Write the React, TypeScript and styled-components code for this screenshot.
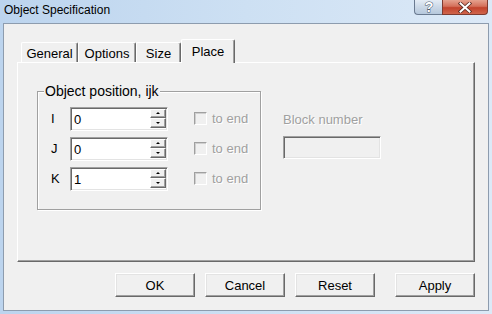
import { createGlobalStyle, styled } from "styled-components";

const Global = createGlobalStyle`
  html, body {
    margin: 0;
    padding: 0;
    overflow: hidden;
    background: #cfe0f2;
  }
`;

const tabs = [
  { label: "General", width: 57 },
  { label: "Options", width: 58 },
  { label: "Size", width: 45 },
  { label: "Place", width: 54, active: true },
];

const rows = [
  { axis: "I", value: "0" },
  { axis: "J", value: "0" },
  { axis: "K", value: "1" },
];

const buttons = [
  { label: "OK" },
  { label: "Cancel" },
  { label: "Reset" },
  { label: "Apply", apart: true },
];

export default function App() {
  return (
    <>
      <Global />
      <Window>
        <TitleBar>
          <Title>Object Specification</Title>
          <CaptionButtons>
            <HelpButton>
              <svg width="12" height="14" viewBox="0 0 12 14">
                <text
                  x="6"
                  y="12"
                  textAnchor="middle"
                  fontFamily="Liberation Sans, sans-serif"
                  fontWeight="bold"
                  fontSize="14"
                  fill="#fff"
                  stroke="#4a5a6e"
                  strokeWidth="1"
                  paintOrder="stroke"
                >
                  ?
                </text>
              </svg>
            </HelpButton>
            <CloseButton>
              <svg width="14" height="11" viewBox="0 0 14 11">
                <path
                  d="M2.5 1.5 L11.5 9.5 M11.5 1.5 L2.5 9.5"
                  stroke="#5a2a22"
                  strokeWidth="3.6"
                  strokeLinecap="square"
                />
                <path
                  d="M2.5 1.5 L11.5 9.5 M11.5 1.5 L2.5 9.5"
                  stroke="#fff"
                  strokeWidth="2"
                  strokeLinecap="square"
                />
              </svg>
            </CloseButton>
          </CaptionButtons>
        </TitleBar>
        <Body>
          <TabStrip>
            {tabs.map((t) => (
              <Tab key={t.label} $width={t.width} $active={t.active}>
                {t.label}
              </Tab>
            ))}
          </TabStrip>
          <Panel>
            <Group>
              <Legend>Object position, ijk</Legend>
              {rows.map((r) => (
                <Row key={r.axis}>
                  <Axis>{r.axis}</Axis>
                  <Edit>
                    <EditText>{r.value}</EditText>
                    <Spin>
                      <SpinButton>
                        <ArrowUp />
                      </SpinButton>
                      <SpinButton>
                        <ArrowDown />
                      </SpinButton>
                    </Spin>
                  </Edit>
                  <Check />
                  <DisabledText>to end</DisabledText>
                </Row>
              ))}
            </Group>
            <BlockColumn>
              <DisabledText>Block number</DisabledText>
              <BlockInput />
            </BlockColumn>
          </Panel>
          <ButtonRow>
            {buttons.map((b) => (
              <PushButton key={b.label} $apart={b.apart}>
                {b.label}
              </PushButton>
            ))}
          </ButtonRow>
        </Body>
      </Window>
    </>
  );
}

const Window = styled.div`
  width: 492px;
  height: 314px;
  box-sizing: border-box;
  display: flex;
  flex-direction: column;
  background: linear-gradient(to right, #bcd4ee 0%, #cde0f3 50%, #dce9f7 100%);
  font-family: "Liberation Sans", Arial, sans-serif;
`;

const TitleBar = styled.div`
  height: 23px;
  display: flex;
  align-items: flex-start;
  padding-left: 4px;
`;

const Title = styled.div`
  padding-top: 3px;
  font-size: 12px;
  line-height: 15px;
  color: #000;
`;

const CaptionButtons = styled.div`
  margin-left: auto;
  margin-right: 4px;
  display: flex;
`;

const CaptionButton = styled.div`
  height: 15px;
  box-sizing: border-box;
  display: flex;
  align-items: center;
  justify-content: center;
  border: 1px solid #6a7a90;
  border-top: none;
`;

const HelpButton = styled(CaptionButton)`
  width: 28px;
  border-right: none;
  border-bottom-left-radius: 4px;
  background: linear-gradient(to bottom, #e4ecf5 0%, #cbd8e7 50%, #b6c8dc 100%);
`;

const CloseButton = styled(CaptionButton)`
  width: 46px;
  border-color: #7e3b30;
  border-bottom-right-radius: 4px;
  background: linear-gradient(to bottom, #e5a28f 0%, #d4705a 45%, #c2432c 55%, #d0654c 100%);
`;

const Body = styled.div`
  flex: 1;
  margin: 0 3px 3px 3px;
  border: 1px solid #8d9cae;
  background: #f0f0f0;
  padding: 15px 13px 0 13px;
  display: flex;
  flex-direction: column;
  font-size: 13px;
  line-height: 15px;
  color: #000;
`;

const TabStrip = styled.div`
  height: 23px;
  display: flex;
  align-items: flex-end;
  padding-left: 4px;
  position: relative;
  z-index: 1;
`;

const Tab = styled.div<{ $width: number; $active?: boolean }>`
  width: ${(p) => p.$width}px;
  height: ${(p) => (p.$active ? 24 : 20)}px;
  margin-bottom: ${(p) => (p.$active ? -1 : 0)}px;
  box-sizing: border-box;
  display: flex;
  align-items: flex-start;
  justify-content: center;
  padding-top: ${(p) => (p.$active ? 4 : 3)}px;
  background: #f0f0f0;
  border-top: 1px solid #fff;
  border-left: 1px solid #fff;
  border-right: 1px solid #696969;
  border-top-left-radius: 2px;
  border-top-right-radius: 2px;
  box-shadow: inset -1px 0 0 #a0a0a0;
`;

const Panel = styled.div`
  width: 458px;
  height: 200px;
  box-sizing: border-box;
  border-top: 1px solid #fff;
  border-left: 1px solid #fff;
  border-right: 1px solid #696969;
  border-bottom: 1px solid #696969;
  box-shadow: inset -1px -1px 0 #a0a0a0;
  padding: 28px 0 0 19px;
  display: flex;
  align-items: flex-start;
`;

const Group = styled.div`
  position: relative;
  width: 224px;
  height: 119px;
  box-sizing: border-box;
  border: 1px solid #a0a0a0;
  box-shadow: inset 1px 1px 0 #fff, 1px 1px 0 #fff;
  padding: 15px 0 0 11px;
  display: flex;
  flex-direction: column;
  gap: 7px;
`;

const Legend = styled.div`
  position: absolute;
  top: -9px;
  left: 6px;
  padding: 0 1px;
  font-size: 14px;
  line-height: 16px;
  background: #f0f0f0;
`;

const Row = styled.div`
  height: 23px;
  display: flex;
  align-items: center;
`;

const Axis = styled.div`
  width: 21px;
  padding-left: 2px;
  box-sizing: border-box;
`;

const Edit = styled.div`
  width: 98px;
  height: 24px;
  box-sizing: border-box;
  display: flex;
  border-top: 1px solid #a0a0a0;
  border-left: 1px solid #a0a0a0;
  border-right: 1px solid #fff;
  border-bottom: 1px solid #fff;
  box-shadow: inset 1px 1px 0 #696969, inset -1px -1px 0 #e3e3e3;
  background: #fff;
  padding: 1px;
`;

const EditText = styled.div`
  flex: 1;
  padding: 3px 0 0 2px;
`;

const Spin = styled.div`
  width: 16px;
  display: flex;
  flex-direction: column;
  margin: 0 0 1px 0;
`;

const SpinButton = styled.div`
  flex: 1;
  display: flex;
  align-items: center;
  justify-content: center;
  background: #f0f0f0;
  border-top: 1px solid #fff;
  border-left: 1px solid #fff;
  border-right: 1px solid #696969;
  border-bottom: 1px solid #696969;
  box-shadow: inset -1px -1px 0 #a0a0a0;
`;

const ArrowUp = styled.div`
  width: 0;
  height: 0;
  border-left: 2px solid transparent;
  border-right: 2px solid transparent;
  border-bottom: 2px solid #000;
`;

const ArrowDown = styled.div`
  width: 0;
  height: 0;
  border-left: 2px solid transparent;
  border-right: 2px solid transparent;
  border-top: 2px solid #000;
`;

const Check = styled.div`
  width: 13px;
  height: 13px;
  box-sizing: border-box;
  margin-left: 26px;
  margin-right: 5px;
  border-top: 1px solid #a0a0a0;
  border-left: 1px solid #a0a0a0;
  border-right: 1px solid #fff;
  border-bottom: 1px solid #fff;
  box-shadow: inset 1px 1px 0 #cfcfcf;
  background: #f0f0f0;
`;

const DisabledText = styled.div`
  color: #a0a0a0;
  text-shadow: 1px 1px 0 #fff;
  white-space: nowrap;
`;

const BlockColumn = styled.div`
  margin-left: 22px;
  padding-top: 21px;
  display: flex;
  flex-direction: column;
  gap: 9px;
`;

const BlockInput = styled.div`
  width: 98px;
  height: 23px;
  box-sizing: border-box;
  border-top: 1px solid #a0a0a0;
  border-left: 1px solid #a0a0a0;
  border-right: 1px solid #fff;
  border-bottom: 1px solid #fff;
  box-shadow: inset 1px 1px 0 #696969, inset -1px -1px 0 #e3e3e3;
  background: #f0f0f0;
`;

const ButtonRow = styled.div`
  display: flex;
  justify-content: flex-end;
  gap: 10px;
  margin-top: 11px;
  padding-right: 13px;
  margin-right: -13px;
`;

const PushButton = styled.div<{ $apart?: boolean }>`
  width: 80px;
  height: 24px;
  box-sizing: border-box;
  margin-left: ${(p) => (p.$apart ? 10 : 0)}px;
  display: flex;
  align-items: center;
  justify-content: center;
  background: #f0f0f0;
  border-top: 1px solid #fff;
  border-left: 1px solid #fff;
  border-right: 1px solid #696969;
  border-bottom: 1px solid #696969;
  box-shadow: inset -1px -1px 0 #a0a0a0, inset 1px 1px 0 #e3e3e3;
`;
